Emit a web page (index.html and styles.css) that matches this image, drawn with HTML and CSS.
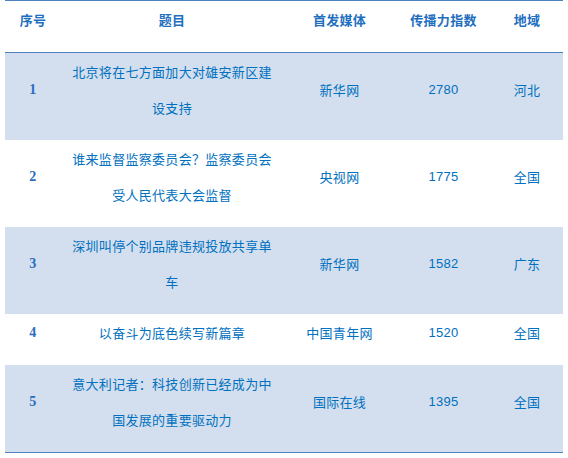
FILE: index.html
```html
<!DOCTYPE html>
<html lang="zh">
<head>
<meta charset="utf-8">
<link rel="stylesheet" href="styles.css">
</head>
<body>
<table class="rank">
  <colgroup>
    <col class="c-no"><col class="c-title"><col class="c-media"><col class="c-index"><col class="c-area">
  </colgroup>
  <thead>
    <tr><th>序号</th><th>题目</th><th>首发媒体</th><th>传播力指数</th><th>地域</th></tr>
  </thead>
  <tbody>
    <tr class="shade"><td class="no">1</td><td class="title">北京将在七方面加大对雄安新区建设支持</td><td>新华网</td><td class="num">2780</td><td>河北</td></tr>
    <tr><td class="no">2</td><td class="title">谁来监督监察委员会？监察委员会受人民代表大会监督</td><td>央视网</td><td class="num">1775</td><td>全国</td></tr>
    <tr class="shade"><td class="no">3</td><td class="title">深圳叫停个别品牌违规投放共享单车</td><td>新华网</td><td class="num">1582</td><td>广东</td></tr>
    <tr><td class="no">4</td><td class="title">以奋斗为底色续写新篇章</td><td>中国青年网</td><td class="num">1520</td><td>全国</td></tr>
    <tr class="shade last"><td class="no">5</td><td class="title">意大利记者：科技创新已经成为中国发展的重要驱动力</td><td>国际在线</td><td class="num">1395</td><td>全国</td></tr>
  </tbody>
</table>
</body>
</html>
```
FILE: styles.css
```css
html, body {
  margin: 0;
  padding: 0;
  background: #ffffff;
}
.rank {
  margin-left: 5px;
  width: 558px;
  border-collapse: collapse;
  table-layout: fixed;
  font-family: "Noto Sans CJK SC", "Liberation Sans", sans-serif;
  font-size: 13px;
  color: #0070c0;
  border-top: 1px solid #4f81bd;
  border-bottom: 1px solid #4f81bd;
}
.c-no { width: 56px; }
.c-title { width: 222px; }
.c-media { width: 113px; }
.c-index { width: 95px; }
.c-area { width: 72px; }
.rank th, .rank td {
  padding: 1px 4px 14px;
  line-height: 36px;
  text-align: center;
  vertical-align: middle;
  letter-spacing: 0.3px;
}
.rank th {
  font-weight: bold;
  color: #1f6fc0;
  border-bottom: 1px solid #4f81bd;
}
.rank td.title {
  padding-left: 8px;
  padding-right: 8px;
}
.rank td.no {
  font-family: "Liberation Serif", serif;
  font-weight: bold;
  font-size: 14px;
  color: #2a6cc0;
}
.rank td.num {
  font-family: "Liberation Sans", sans-serif;
  font-size: 13px;
}
.shade td {
  background: #d3dfee;
}
```
